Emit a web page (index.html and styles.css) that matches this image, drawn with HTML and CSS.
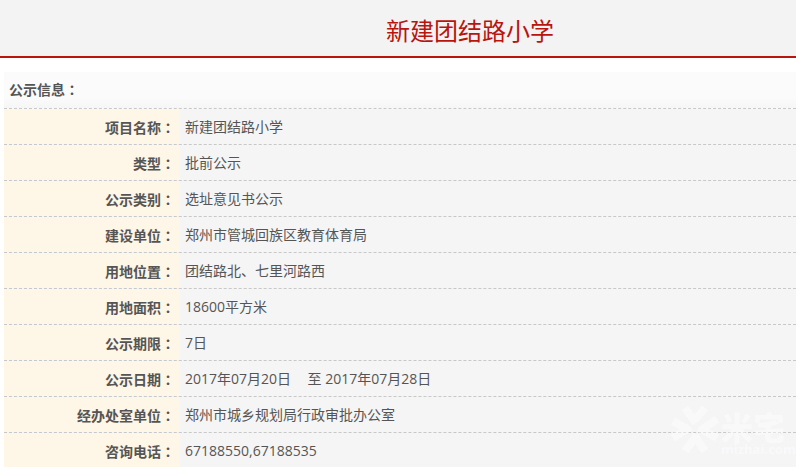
FILE: index.html
```html
<!DOCTYPE html>
<html lang="zh-CN">
<head>
<meta charset="utf-8">
<title>新建团结路小学</title>
<link rel="stylesheet" href="styles.css">
</head>
<body>
<header class="head"><h1 class="title">新建团结路小学</h1></header>
<main class="panel">
  <div class="caption">公示信息<span class="colon" lang="zh-TW">：</span></div>
  <div class="row"><div class="key">项目名称<span class="colon" lang="zh-TW">：</span></div><div class="val">新建团结路小学</div></div>
  <div class="row"><div class="key">类型<span class="colon" lang="zh-TW">：</span></div><div class="val">批前公示</div></div>
  <div class="row"><div class="key">公示类别<span class="colon" lang="zh-TW">：</span></div><div class="val">选址意见书公示</div></div>
  <div class="row"><div class="key">建设单位<span class="colon" lang="zh-TW">：</span></div><div class="val">郑州市管城回族区教育体育局</div></div>
  <div class="row"><div class="key">用地位置<span class="colon" lang="zh-TW">：</span></div><div class="val">团结路北、七里河路西</div></div>
  <div class="row"><div class="key">用地面积<span class="colon" lang="zh-TW">：</span></div><div class="val">18600平方米</div></div>
  <div class="row"><div class="key">公示期限<span class="colon" lang="zh-TW">：</span></div><div class="val">7日</div></div>
  <div class="row"><div class="key">公示日期<span class="colon" lang="zh-TW">：</span></div><div class="val">2017年07月20日 &nbsp;&nbsp; <span class="sep">至</span> 2017年07月28日</div></div>
  <div class="row"><div class="key">经办处室单位<span class="colon" lang="zh-TW">：</span></div><div class="val">郑州市城乡规划局行政审批办公室</div></div>
  <div class="row"><div class="key">咨询电话<span class="colon" lang="zh-TW">：</span></div><div class="val">67188550,67188535</div></div>
</main>
<div class="mark">
  <svg class="mark-icon" width="48" height="48" viewBox="0 0 48 48"><path d="M14 3L25 18M34 3L24 15M2 16L19 26M46 14L29 26M2 33L19 22M46 33L28 23M14 46L26 30M34 46L24 31" fill="none" stroke="#fff" stroke-width="8"/></svg>
  <div class="mark-text"><div class="mark-cn">米宅</div><div class="mark-en">mizhai.com</div></div>
</div>
</body>
</html>
```
FILE: styles.css
```css
html, body {
  margin: 0;
  padding: 0;
  height: 467px;
  overflow: hidden;
  background: #fff;
  font-family: "Open Sans", "Noto Sans CJK SC", sans-serif;
  color: #555;
  position: relative;
}
.head {
  height: 53px;
  background: #f3f3f3;
  border-bottom: 2px solid #b9140d;
  display: flex;
  align-items: center;
  padding: 3px 0 0 386px;
}
.title {
  margin: 0;
  font-size: 24px;
  font-weight: 400;
  line-height: 32px;
  color: #b9140d;
  font-family: "Noto Sans CJK SC", sans-serif;
}
.panel {
  margin: 14px 0 0 4px;
  background: #f5f5f5;
}
.caption {
  height: 36px;
  line-height: 35px;
  padding-left: 5px;
  font-size: 14px;
  font-weight: 700;
  color: #555;
  background: linear-gradient(#fbfbfb 70%, #f6f6f6);
  border-bottom: 1px dashed #c8c8c8;
}
.row {
  display: flex;
  height: 35px;
  line-height: 36px;
  font-size: 14px;
  border-bottom: 1px dashed #c8c8c8;
}
.row:last-child { border-bottom: 0; }
.key {
  width: 176px;
  flex: none;
  box-sizing: border-box;
  padding-right: 5px;
  text-align: right;
  font-weight: 700;
  background: #fef6e6;
}
.colon { font-family: "Noto Sans CJK TC", sans-serif; }
.val {
  padding-left: 5px;
}
.sep { margin-left: 2px; }
.mark {
  position: absolute;
  left: 671px;
  top: 405px;
  display: flex;
  align-items: flex-start;
  gap: 2px;
  opacity: 0.45;
  color: #fff;
  font-family: "Noto Sans CJK SC", sans-serif;
}
.mark-text { text-align: center; width: 64px; padding-top: 4px; }
.mark-cn { font-size: 32px; font-weight: 900; line-height: 34px; }
.mark-en { font-size: 13px; font-weight: 700; line-height: 13px; font-family: "Open Sans", sans-serif; }
```
